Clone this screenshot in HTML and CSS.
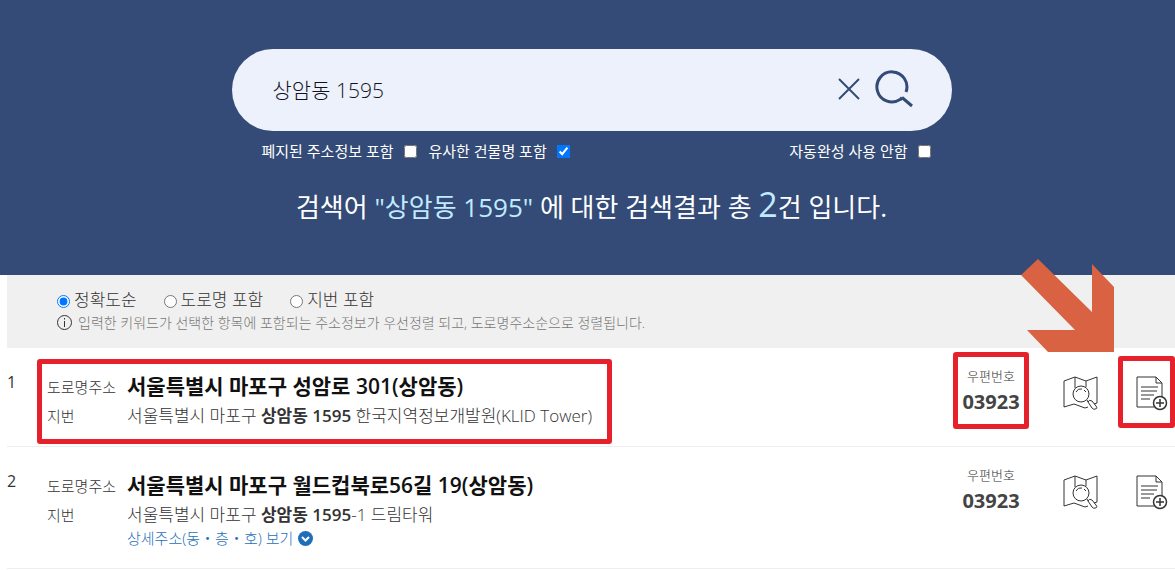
FILE: index.html
```html
<!DOCTYPE html>
<html lang="ko">
<head>
    <meta charset="UTF-8">
    <meta name="viewport" content="width=device-width, initial-scale=1.0">
    <title>주소 검색</title>
    <link rel="stylesheet" href="styles.css">
</head>
<body>
    <!-- shared icons -->
    <svg class="sprite" aria-hidden="true">
        <symbol id="icon-map" viewBox="0 0 36 36">
            <path d="M11 28 1 31V5L12 1l11 4 11-4v26l-3 1M12 1v11M23 5v6M11 28l11 4 3-1"/>
            <circle cx="18" cy="18" r="8"/>
            <path d="M13 16q2-4 6-3M21 14l2 2M24 24l1 2"/>
            <path d="M25 26q1-3 4-1l4 5q2 3-1 3-1 1-3-1z"/>
        </symbol>
        <symbol id="icon-doc" viewBox="0 0 32 36">
            <path d="M18 31H1V1h19l6 6v14M20 1v6h6M5 11h17M5 15h16M5 19h13M5 23h9"/>
            <circle cx="24" cy="27" r="6.5" class="ring"/>
            <path d="M24 23v8M20 27h8" class="ring"/>
        </symbol>
    </svg>

    <header class="search-header">
        <form class="search-form">
            <div class="search-box">
                <input type="text" class="search-input" value="상암동 1595" aria-label="검색어">
                <button type="reset" class="icon-btn" aria-label="지우기">
                    <svg width="22" height="22" viewBox="0 0 22 22"><path d="M1 1l20 20M21 1L1 21" stroke-width="2"/></svg>
                </button>
                <button type="submit" class="icon-btn" aria-label="검색">
                    <svg width="38" height="38" viewBox="0 0 38 38"><path d="M31 22A15 15 0 1 0 25 29.500M27 27.500l10 8.500M27 27.500l-2 2.500" stroke-width="3"/></svg>
                </button>
            </div>
            <div class="search-options">
                <label>폐지된 주소정보 포함 <input type="checkbox"></label>
                <label>유사한 건물명 포함 <input type="checkbox" checked></label>
                <label class="option-right">자동완성 사용 안함 <input type="checkbox"></label>
            </div>
        </form>
        <h1 class="summary">검색어 <span class="keyword">"상암동 1595"</span> 에 대한 검색결과 총 <span class="count">2</span>건 입니다.</h1>
    </header>

    <main class="content">
        <section class="sort-bar">
            <div class="sort-options">
                <label><input type="radio" name="sort" checked>정확도순</label>
                <label><input type="radio" name="sort">도로명 포함</label>
                <label><input type="radio" name="sort">지번 포함</label>
            </div>
            <p class="sort-info">
                <svg width="15" height="15" viewBox="0 0 15 15"><circle cx="7.5" cy="7.5" r="7"/><path d="M7.5 6v6M7.5 3v1.5"/></svg>
                입력한 키워드가 선택한 항목에 포함되는 주소정보가 우선정렬 되고, 도로명주소순으로 정렬됩니다.
            </p>
        </section>

        <ol class="results">
            <li class="result">
                <span class="number">1</span>
                <div class="address">
                    <dl class="address-list marked mark-address">
                        <dt>도로명주소</dt>
                        <dd class="road">서울특별시 마포구 성암로 301(상암동)</dd>
                        <dt>지번</dt>
                        <dd>서울특별시 마포구 <b>상암동 1595</b> 한국지역정보개발원(KLID Tower)</dd>
                    </dl>
                </div>
                <div class="zip marked mark-zip">
                    <span class="zip-label">우편번호</span>
                    <strong class="zip-code">03923</strong>
                </div>
                <button type="button" class="icon-btn map-btn" aria-label="지도 보기"><svg width="36" height="36"><use href="#icon-map"/></svg></button>
                <button type="button" class="icon-btn doc-btn marked mark-doc" aria-label="상세 보기"><svg width="32" height="36"><use href="#icon-doc"/></svg></button>
            </li>
            <li class="result">
                <span class="number">2</span>
                <div class="address">
                    <dl class="address-list">
                        <dt>도로명주소</dt>
                        <dd class="road">서울특별시 마포구 월드컵북로56길 19(상암동)</dd>
                        <dt>지번</dt>
                        <dd>서울특별시 마포구 <b>상암동 1595</b>-1 드림타워</dd>
                    </dl>
                    <a href="#" class="detail-link">상세주소(동・층・호) 보기
                        <svg width="15" height="15" viewBox="0 0 15 15"><circle cx="7.5" cy="7.5" r="7.5"/><path d="M4 6l3.5 3.5L11 6"/></svg>
                    </a>
                </div>
                <div class="zip">
                    <span class="zip-label">우편번호</span>
                    <strong class="zip-code">03923</strong>
                </div>
                <button type="button" class="icon-btn map-btn" aria-label="지도 보기"><svg width="36" height="36"><use href="#icon-map"/></svg></button>
                <button type="button" class="icon-btn doc-btn" aria-label="상세 보기"><svg width="32" height="36"><use href="#icon-doc"/></svg></button>
            </li>
        </ol>

        <svg class="arrow" width="93" height="93" viewBox="0 0 93 93" aria-hidden="true">
            <path d="M17 0 0 16l54 55H6l21 22h66V28L71 5v48z"/>
        </svg>
    </main>
</body>
</html>
```

FILE: styles.css
```css
:root {
    --navy: #334b76;
    --pale: #edf1fc;
    --sky: #c0eaff;
    --red: #e7212b;
    --orange: #d96242;
    --link: #1f6fb8;
}

* {
    margin: 0;
    padding: 0;
    box-sizing: border-box;
}

body {
    font-family: "Open Sans", "Noto Sans CJK KR", sans-serif;
    background: white;
    color: #333;
}

svg {
    display: block;
    fill: none;
    stroke: #333;
}

.sprite {
    position: absolute;
    width: 0;
    height: 0;
}

.ring {
    stroke-width: 1.5;
}

.icon-btn {
    border: none;
    background: none;
    cursor: pointer;
}

/* Search header */
.search-header {
    background: var(--navy);
    color: white;
    padding: 49px 0 44px 8px;
}

.search-form {
    max-width: 720px;
    margin: 0 auto;
}

.search-box {
    display: flex;
    align-items: center;
    gap: 15px;
    height: 82px;
    padding: 0 39px 2px 41px;
    border-radius: 41px;
    background: var(--pale);
}

.search-box svg {
    stroke: var(--navy);
}

.search-input {
    flex: 1;
    min-width: 0;
    border: none;
    outline: none;
    background: none;
    font-family: inherit;
    font-size: 21px;
    font-weight: 300;
    color: #112;
}

.search-options {
    display: flex;
    gap: 12px;
    padding: 8px 21px 0 30px;
    font-size: 15px;
    line-height: 24px;
}

.search-options label {
    display: flex;
    align-items: center;
    gap: 10px;
}

.search-options .option-right {
    margin-left: auto;
}

.summary {
    margin-top: 20px;
    font-size: 26px;
    font-weight: 400;
    line-height: 48px;
    text-align: center;
}

.keyword,
.count {
    color: var(--sky);
}

.count {
    font-size: 34px;
    line-height: 40px;
}

/* Sort bar */
.content {
    position: relative;
    margin-left: 7px;
}

.sort-bar {
    padding: 13px 0 15px 50px;
    background: #f0f0f0;
}

.sort-options {
    display: flex;
    gap: 27px;
    font-size: 17px;
    font-weight: 300;
    line-height: 24px;
}

.sort-options label {
    display: flex;
    align-items: center;
    gap: 4px;
}

.sort-options input {
    width: 13px;
    height: 13px;
    margin-top: 2px;
}

.sort-info {
    display: flex;
    align-items: center;
    gap: 6px;
    font-size: 14px;
    font-weight: 300;
    line-height: 21px;
    color: #777;
}

/* Results */
.results {
    list-style: none;
}

.result {
    display: flex;
    align-items: flex-start;
    padding: 24px 0 16px;
    border-bottom: 1px solid #eee;
}

.number {
    width: 40px;
    font-size: 16px;
    line-height: 20px;
}

.address {
    flex: 1;
}

.address-list {
    display: grid;
    grid-template-columns: 80px auto;
    align-items: center;
    width: fit-content;
    font-size: 17px;
    font-weight: 300;
    line-height: 29px;
}

.address-list dt {
    padding-top: 2px;
    font-size: 15px;
    line-height: 27px;
}

.address-list b {
    font-weight: 600;
}

.address-list .road {
    font-size: 21px;
    font-weight: 600;
    color: #111;
}

.detail-link {
    display: flex;
    align-items: center;
    gap: 5px;
    padding: 0 0 5px 80px;
    font-size: 15px;
    font-weight: 300;
    line-height: 18px;
    color: var(--link);
    text-decoration: none;
}

.detail-link circle {
    fill: var(--link);
    stroke: none;
}

.detail-link path {
    stroke: white;
    stroke-width: 2;
}

.zip {
    width: 60px;
    text-align: center;
}

.zip-label,
.zip-code {
    display: block;
}

.zip-label {
    font-size: 13px;
    font-weight: 300;
    line-height: 8px;
}

.zip-code {
    padding-top: 8px;
    font-size: 20px;
    line-height: 28px;
    color: #444;
}

.map-btn {
    margin: 4px 0 0 42px;
}

.doc-btn {
    margin: 4px 7px 0 37px;
}

/* Highlight frames and arrow */
.marked {
    position: relative;
}

.marked::after {
    content: "";
    position: absolute;
    border: 5px solid var(--red);
    border-radius: 3px;
    pointer-events: none;
}

.mark-address::after {
    inset: -13px -20px -14px -10px;
}

.mark-zip::after {
    inset: -20px -8px -13px;
}

.mark-doc::after {
    inset: -20px -7px -16px -18px;
}

.arrow {
    position: absolute;
    top: -16px;
    right: 61px;
    fill: var(--orange);
    stroke: none;
}
```
